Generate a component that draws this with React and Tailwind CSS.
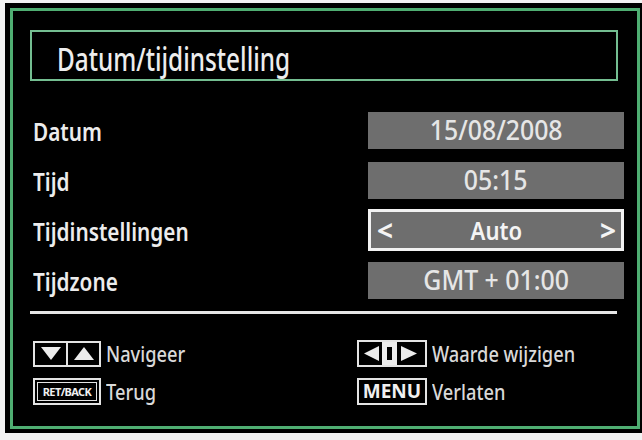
const font = "font-['Noto_Sans','Open_Sans',sans-serif]";

const rows = [
    { label: "Datum", value: "15/08/2008" },
    { label: "Tijd", value: "05:15" },
    { label: "Tijdinstellingen", value: "Auto", selected: true },
    { label: "Tijdzone", value: "GMT + 01:00" },
];

// the TV font is a narrow one, so squeeze the wider installed font sideways
const Narrow = ({ children, className = "" }) => (
    <span className={`inline-block whitespace-nowrap ${className}`}>{children}</span>
);

const NavKeys = () => (
    <div className="flex h-[26px] w-[68px]">
        <div className="flex flex-1 items-center justify-center border-2 border-[#e4e4e4]">
            <svg width="22" height="15" viewBox="0 0 22 15">
                <polygon points="1,1 21,1 11,14" fill="#ececec" />
            </svg>
        </div>
        <div className="flex flex-1 items-center justify-center border-2 border-l-0 border-[#e4e4e4]">
            <svg width="22" height="15" viewBox="0 0 22 15">
                <polygon points="11,1 21,14 1,14" fill="#ececec" />
            </svg>
        </div>
    </div>
);

const SideKeys = () => (
    <div className="flex h-[27px] w-[70px] items-center justify-center border-2 border-[#e4e4e4]">
        <svg width="66" height="23" viewBox="0 0 66 23">
            <polygon points="5,11.5 20,4 20,19" fill="#ececec" />
            <rect x="25.5" y="2.5" width="10" height="18" fill="none" stroke="#ececec" strokeWidth="5" />
            <polygon points="58,11.5 42,4 42,19" fill="#ececec" />
        </svg>
    </div>
);

export default function App() {
    return (
        <div className={`h-[440px] w-[642px] overflow-hidden bg-[#f3f3f3] pl-[5px] pt-[3px] ${font}`}>
            <div className="h-[430px] w-[637px] bg-black p-[5px] pr-[2px]">
                <div className="h-[421px] w-[630px] border-[3px] border-[#4fae72]">
                    {/* Title */}
                    <div className="ml-[17px] mt-[19px] flex h-[51px] w-[588px] items-center border-2 border-[#74be91] pl-[25px] pt-[6px]">
                        <Narrow className="origin-left scale-x-[0.76] text-[32px] font-medium leading-none text-[#ededed]">
                            Datum/tijdinstelling
                        </Narrow>
                    </div>

                    {/* Settings rows */}
                    <div className="mt-[24px] pl-[20px] pr-[13px]">
                        {rows.map((row) => (
                            <div key={row.label} className="flex h-[50px] items-center justify-between">
                                <Narrow className="origin-left scale-x-[0.83] pt-[4px] text-[25px] font-semibold text-[#ececec]">
                                    {row.label}
                                </Narrow>
                                {row.selected ? (
                                    <div className="flex h-[42px] w-[256px] items-center justify-between border-[3px] border-[#f2f2f2] bg-[#6e6e6e] pl-[6px] pr-[5px] text-[26px] font-semibold text-[#f4f4f4]">
                                        <span className="text-[28px] font-bold">&lt;</span>
                                        <Narrow className="scale-x-[0.85]">{row.value}</Narrow>
                                        <span className="text-[28px] font-bold">&gt;</span>
                                    </div>
                                ) : (
                                    <div className="flex h-[37px] w-[256px] items-center justify-center bg-[#6e6e6e] text-[27px] font-medium text-[#e6e6e6]">
                                        <Narrow className="scale-x-[0.92]">{row.value}</Narrow>
                                    </div>
                                )}
                            </div>
                        ))}
                    </div>

                    <div className="ml-[17px] mt-[6px] h-[3px] w-[587px] bg-[#e6e6e6]" />

                    {/* Legend */}
                    <div className="mt-[23px] grid grid-cols-[324px_1fr] gap-y-[5px] pl-[20px] text-[22px] font-medium text-[#d9d9d9]">
                        <div className="flex items-center gap-[5px]">
                            <NavKeys />
                            <Narrow className="origin-left scale-x-[0.83]">Navigeer</Narrow>
                        </div>
                        <div className="flex items-center gap-[5px]">
                            <SideKeys />
                            <Narrow className="origin-left scale-x-[0.83]">Waarde wijzigen</Narrow>
                        </div>
                        <div className="flex items-center gap-[5px]">
                            <div className="flex h-[27px] w-[68px] items-center justify-center border-2 border-[#e4e4e4] p-[2px]">
                                <div className="flex h-full w-full items-center justify-center border border-[#e4e4e4] text-[11px] font-bold leading-none tracking-[-0.6px] text-[#f0f0f0]">
                                    RET/BACK
                                </div>
                            </div>
                            <Narrow className="origin-left scale-x-[0.83]">Terug</Narrow>
                        </div>
                        <div className="flex items-center gap-[5px]">
                            <div className="flex h-[27px] w-[70px] items-center justify-center border-2 border-[#e4e4e4] text-[19px] font-bold leading-none text-[#f0f0f0]">
                                MENU
                            </div>
                            <Narrow className="origin-left scale-x-[0.83]">Verlaten</Narrow>
                        </div>
                    </div>
                </div>
            </div>
        </div>
    );
}
